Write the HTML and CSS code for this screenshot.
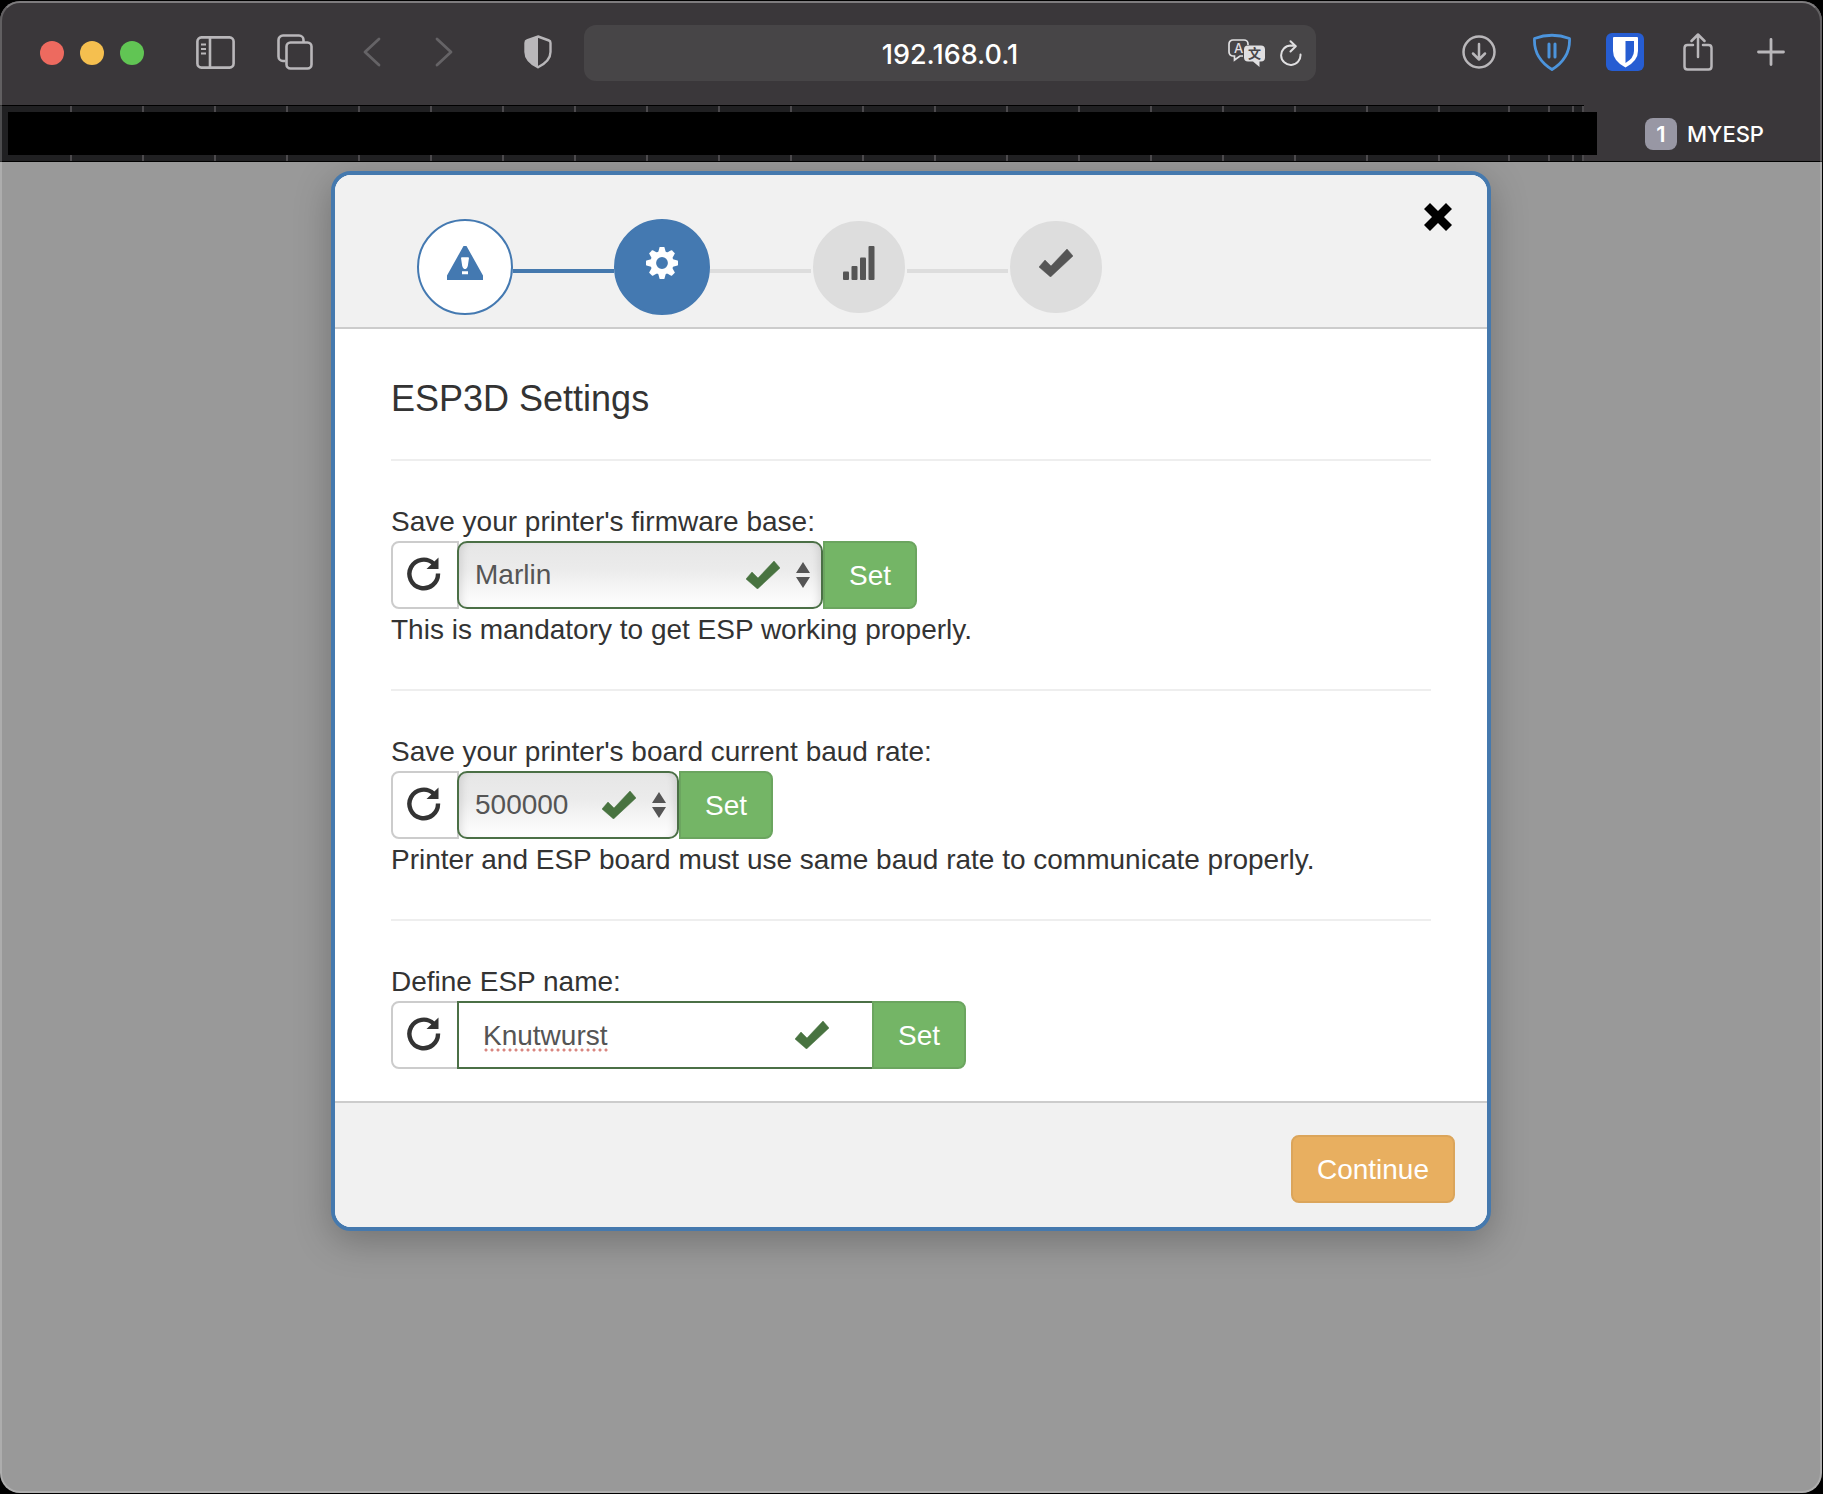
FILE: index.html
```html
<!DOCTYPE html>
<html lang="en">
<head>
<meta charset="utf-8">
<title>MYESP</title>
<link rel="stylesheet" href="styles.css">
</head>
<body>
<svg class="sprite" aria-hidden="true">
  <symbol id="check" viewBox="0 0 34 28"><path d="M0 18 6 11 12 17 28 0 34 7 11.500 28Z" stroke="currentColor" stroke-width=".5"/></symbol>
  <symbol id="repeat" viewBox="0 0 34 34"><path d="M31 16.500A14.300 14.300 0 1 1 26.500 6.500" fill="none" stroke="currentColor" stroke-width="4.400"/><path d="M19.500 12H31.500V0.500Z"/></symbol>
  <symbol id="sort" viewBox="0 0 14 26"><path d="M7 0 14 11H0ZM7 26 14 15H0Z"/></symbol>
</svg>
<div class="window">
  <header class="toolbar">
    <div class="lights"><span class="light red"></span><span class="light yellow"></span><span class="light green"></span></div>
    <div class="tools tools-wide">
      <button class="tool" aria-label="Sidebar"><svg width="39" height="34" viewBox="0 0 39 34" fill="none" stroke="currentColor" stroke-width="2.600"><rect x="1.400" y="2.400" width="36.200" height="30.200" rx="4"/><path d="M14 2V32"/><path d="M5 9.500H10M5 14H10M5 18.500H10" stroke-width="1.800"/></svg></button>
      <button class="tool" aria-label="Tab overview"><svg width="36" height="36" viewBox="0 0 36 36" fill="none" stroke="currentColor" stroke-width="2.600"><path d="M8.500 27H6A4.500 4.500 0 0 1 1.500 22.500V6A4.500 4.500 0 0 1 6 1.500H22A4.500 4.500 0 0 1 26.500 6V8"/><rect x="9.500" y="8.500" width="25" height="26" rx="4"/></svg></button>
    </div>
    <div class="tools tools-nav">
      <button class="tool dim" aria-label="Back"><svg width="18" height="30" viewBox="0 0 18 30" fill="none" stroke="currentColor" stroke-width="2.800" stroke-linecap="round" stroke-linejoin="round"><path d="M16 2 2 15 16 28"/></svg></button>
      <button class="tool dim" aria-label="Forward"><svg width="18" height="30" viewBox="0 0 18 30" fill="none" stroke="currentColor" stroke-width="2.800" stroke-linecap="round" stroke-linejoin="round"><path d="M2 2 16 15 2 28"/></svg></button>
    </div>
    <button class="tool privacy" aria-label="Privacy report"><svg width="28" height="34" viewBox="0 0 28 34"><path d="M14 1.500 25 5.500Q26.500 6 26.500 8V17Q26.500 26 14 32.300Q1.500 26 1.500 17V8Q1.500 6 3 5.500Z" fill="none" stroke="currentColor" stroke-width="2.400"/><path d="M14 1V33Q1 26 1 17V6Z"/></svg></button>
    <div class="address">
      <input class="url" aria-label="Address" value="192.168.0.1">
      <div class="address-tools">
        <button class="mini" aria-label="Translate"><svg width="37" height="28" viewBox="0 0 37 28"><path d="M15 17H12L6.500 21V17H5A4 4 0 0 1 1 13V5A4 4 0 0 1 5 1H16A4 4 0 0 1 20 5V6" fill="none" stroke="currentColor" stroke-width="1.700"/><text class="glyph" x="6" y="14" font-size="13">A</text><path d="M20 6.500H33A4 4 0 0 1 37 10.500V18.500A4 4 0 0 1 33 22.500H31.500V28L25 22.500H20A4 4 0 0 1 16 18.500V10.500A4 4 0 0 1 20 6.500Z"/><text class="glyph glyph-dark" x="20" y="19" font-size="13">文</text></svg></button>
        <button class="mini" aria-label="Reload"><svg width="22" height="26" viewBox="0 0 22 26" fill="none" stroke="currentColor" stroke-width="2" stroke-linecap="round" stroke-linejoin="round"><path d="M20.500 14.500A9.700 9.700 0 1 1 10.800 5.500L15.500 6M10.500 1.200 15.800 6.200 10.500 11.500"/></svg></button>
      </div>
    </div>
    <div class="tools tools-right">
      <button class="tool" aria-label="Downloads"><svg width="34" height="34" viewBox="0 0 34 34" fill="none" stroke="currentColor" stroke-width="2.500" stroke-linecap="round" stroke-linejoin="round"><circle cx="17" cy="17" r="15.500"/><path d="M17 9V24M11 18.500 17 24.500 23 18.500"/></svg></button>
      <button class="tool blocker" aria-label="Content blocker"><svg width="38" height="38" viewBox="0 0 38 38" fill="none" stroke="currentColor" stroke-linejoin="round"><path d="M1.500 5.500Q19-1 36.500 5.500Q37.500 25 19 36.500Q0.500 25 1.500 5.500Z" stroke-width="2.800"/><path d="M16 11V24M22 11V24" stroke-width="3" stroke-linecap="round"/></svg></button>
      <button class="tool" aria-label="Password manager"><svg width="38" height="38" viewBox="0 0 38 38"><rect width="38" height="38" rx="6" fill="#265dd2"/><path d="M8 4H31Q32 4 32 5V18Q32 28 19.500 34.500Q7 28 7 18V5Q7 4 8 4Z" fill="#fff"/><path d="M19.500 8H28V18Q28 25 19.500 30Z" fill="#265dd2"/></svg></button>
      <button class="tool" aria-label="Share"><svg width="30" height="38" viewBox="0 0 30 38" fill="none" stroke="currentColor" stroke-width="2.500" stroke-linecap="round" stroke-linejoin="round"><path d="M10 12H4.500Q1.500 12 1.500 15V33.500Q1.500 36.500 4.500 36.500H25.500Q28.500 36.500 28.500 33.500V15Q28.500 12 25.500 12H20M15 24V2M8.500 8 15 1.500 21.500 8"/></svg></button>
      <button class="tool" aria-label="New tab"><svg width="28" height="28" viewBox="0 0 28 28" fill="none" stroke="currentColor" stroke-width="2.800" stroke-linecap="round"><path d="M14 1.500V26.500M1.500 14H26.500"/></svg></button>
    </div>
  </header>

  <nav class="tabbar" aria-label="Tabs">
    <div class="tabs">
      <span class="tab"></span><span class="tab"></span><span class="tab"></span><span class="tab"></span><span class="tab"></span>
      <span class="tab"></span><span class="tab"></span><span class="tab"></span><span class="tab"></span><span class="tab"></span>
      <span class="tab"></span><span class="tab"></span><span class="tab"></span><span class="tab"></span><span class="tab"></span>
      <span class="tab"></span><span class="tab"></span><span class="tab"></span><span class="tab"></span><span class="tab"></span>
      <span class="tab large"></span><span class="tab medium"></span><span class="tab small"></span><span class="tab tiny"></span>
      <div class="cover"></div>
    </div>
    <a class="tab-active" href="#"><span class="badge">1</span>MYESP</a>
  </nav>

  <main class="page">
    <section class="modal" role="dialog" aria-labelledby="title">
      <div class="modal-header">
        <ol class="steps">
          <li class="step done"><svg width="36" height="34" viewBox="0 0 36 34"><path fill-rule="evenodd" d="M16.500 0H19.500L36 29.500V34H0V29.500ZM14 12Q14 11.200 15 11.200H21Q22 11.200 22 12L20.800 20Q20 23 18.700 23H17.300Q16 23 15.200 20ZM15 25.300V28.300H21V25.300Z"/></svg></li>
          <li class="bar bar-done"></li>
          <li class="step current"><svg width="32" height="32" viewBox="-16 -16 32 32"><circle r="8.800" fill="none" stroke="currentColor" stroke-width="5.800"/><g id="teeth"><path id="tooth" d="M-4-10-2.500-15.500Q-2.300-16-1.800-16H1.800Q2.300-16 2.500-15.500L4-10Z"/><use href="#tooth" transform="rotate(45)"/><use href="#tooth" transform="rotate(90)"/><use href="#tooth" transform="rotate(135)"/></g><use href="#teeth" transform="rotate(180)"/></svg></li>
          <li class="bar"></li>
          <li class="step"><svg width="32" height="34" viewBox="0 0 32 34"><rect y="25.500" width="6" height="8.500" rx="1"/><rect x="8.500" y="20" width="6" height="14" rx="1"/><rect x="17" y="11.500" width="6" height="22.500" rx="1"/><rect x="25.500" width="6" height="34" rx="1"/></svg></li>
          <li class="bar"></li>
          <li class="step"><svg width="34" height="28"><use href="#check"/></svg></li>
        </ol>
        <button class="close" aria-label="Close"><svg width="28" height="28" viewBox="0 0 28 28"><path d="M6 0 14 8 22 0 28 6 20 14 28 22 22 28 14 20 6 28 0 22 8 14 0 6Z"/></svg></button>
      </div>

      <div class="modal-body">
        <h4 class="title" id="title">ESP3D Settings</h4>
        <hr class="rule">
        <label class="line" for="firmware">Save your printer's firmware base:</label>
        <div class="group">
          <button class="btn refresh" aria-label="Refresh firmware"><svg width="34" height="34"><use href="#repeat"/></svg></button>
          <div class="field field-firmware">
            <select class="control select" id="firmware"><option>Marlin</option></select>
            <svg class="field-check" width="34" height="28"><use href="#check"/></svg>
            <svg class="field-sort" width="14" height="26"><use href="#sort"/></svg>
          </div>
          <button class="btn set">Set</button>
        </div>
        <p class="line">This is mandatory to get ESP working properly.</p>
        <hr class="rule">
        <label class="line" for="baud">Save your printer's board current baud rate:</label>
        <div class="group">
          <button class="btn refresh" aria-label="Refresh baud rate"><svg width="34" height="34"><use href="#repeat"/></svg></button>
          <div class="field field-baud">
            <select class="control select" id="baud"><option>500000</option></select>
            <svg class="field-check" width="34" height="28"><use href="#check"/></svg>
            <svg class="field-sort" width="14" height="26"><use href="#sort"/></svg>
          </div>
          <button class="btn set">Set</button>
        </div>
        <p class="line">Printer and ESP board must use same baud rate to communicate properly.</p>
        <hr class="rule">
        <label class="line" for="name">Define ESP name:</label>
        <div class="group">
          <button class="btn refresh" aria-label="Refresh name"><svg width="34" height="34"><use href="#repeat"/></svg></button>
          <div class="field field-name">
            <input class="control text" id="name" value="Knutwurst" spellcheck="false">
            <span class="misspelt"></span>
            <svg class="field-check" width="34" height="28"><use href="#check"/></svg>
          </div>
          <button class="btn set">Set</button>
        </div>
      </div>

      <div class="modal-footer"><button class="btn continue">Continue</button></div>
    </section>
  </main>
</div>
</body>
</html>
```
FILE: styles.css
```css
* { box-sizing: border-box; }
body {
  margin: 0;
  padding: 1px 1px 1px 0;
  background: #000;
  color: #333;
  font: 28px/40px "Liberation Sans", Arial, sans-serif;
}
button, input, select { font: inherit; color: inherit; margin: 0; }
button { cursor: pointer; }
svg { display: block; flex: none; }
svg:not([fill]) { fill: currentColor; }
.sprite { position: absolute; width: 0; height: 0; }

/* Browser window */
.window {
  position: relative;
  display: flex;
  flex-direction: column;
  min-height: calc(100vh - 2px);
  border-radius: 20px;
  overflow: hidden;
  background: #999;
}
.window::after {
  content: "";
  position: absolute;
  inset: 0;
  border: 2px solid rgba(255, 255, 255, 0.2);
  border-top-color: rgba(255, 255, 255, 0.35);
  border-radius: 20px;
  pointer-events: none;
}
.toolbar {
  display: flex;
  align-items: center;
  height: 104px;
  padding: 0 15px 0 40px;
  background: #3a373a;
  color: #b9b7ba;
}
.lights { display: flex; gap: 16px; margin-right: 31px; }
.light { width: 24px; height: 24px; border-radius: 50%; }
.red { background: #ed6a5f; }
.yellow { background: #f5bf4f; }
.green { background: #61c554; }
.tools { display: flex; }
.tool {
  display: flex;
  align-items: center;
  justify-content: center;
  width: 72px;
  height: 56px;
  padding: 0 0 2px;
  border: 0;
  background: none;
}
.tools-wide .tool { width: 80px; }
.tools-nav { margin-left: 1px; }
.tools-right { margin-left: 126px; }
.tools-right .tool { width: 73px; }
.privacy { margin: 0 10px 0 22px; }
.dim { color: #656366; }
.blocker { color: #4c94dc; }
.address {
  position: relative;
  flex: 1;
  min-width: 0;
}
.url {
  display: block;
  width: 100%;
  height: 56px;
  padding: 2px 0 0;
  border: 0;
  border-radius: 12px;
  background: #474547;
  color: #fff;
  text-align: center;
  font: 500 27px/54px Inter, sans-serif;
}
.address-tools {
  position: absolute;
  top: 0;
  right: 14px;
  display: flex;
  align-items: center;
  gap: 15px;
  height: 56px;
  color: #e0dfe1;
}
.mini { padding: 0; border: 0; background: none; }
.glyph { font-family: Inter, "Noto Sans CJK SC", sans-serif; font-weight: 500; }
.glyph-dark { fill: #474547; font-weight: 700; }

/* Tab strip */
.tabbar {
  display: flex;
  height: 57px;
  border-bottom: 1px solid #000;
  background: #3a373a;
}
.tabs {
  position: relative;
  display: flex;
  flex: 1;
  border-top: 1px solid #000;
  background: #202022;
}
.tab { flex: 72 1 0; box-shadow: inset -2px 0 #4c4a4d; }
.large { flex-grow: 70; }
.medium { flex-grow: 40; }
.small { flex-grow: 24; }
.tiny { flex-grow: 10; }
.cover {
  position: absolute;
  inset: 6px -13px 6px 8px;
  background: #000;
}
.tab-active {
  display: flex;
  align-items: center;
  gap: 10px;
  width: 238px;
  padding: 2px 0 0 61px;
  color: #fff;
  text-decoration: none;
  font: 500 22px/32px Inter, sans-serif;
}
.badge {
  width: 32px;
  height: 32px;
  border-radius: 8px;
  background: #9897a4;
  text-align: center;
  font-weight: 600;
}

/* Dialog */
.page { flex: 1; padding: 9px 16px 32px; }
.modal {
  max-width: 1160px;
  margin: 0 auto;
  border: 4px solid #4579ae;
  border-radius: 20px;
  overflow: hidden;
  background: #fff;
  box-shadow: 0 10px 36px rgba(0, 0, 0, 0.25);
}
.modal-header {
  display: flex;
  align-items: flex-start;
  justify-content: space-between;
  padding: 28px 35px 12px 82px;
  border-bottom: 2px solid #ccc;
  background: #f1f1f1;
}
.steps {
  display: flex;
  align-items: flex-start;
  margin: 16px 0 0;
  padding: 0;
  list-style: none;
}
.step {
  display: flex;
  align-items: center;
  justify-content: center;
  width: 96px;
  height: 96px;
  padding: 0 0 8px;
  border: 2px solid #f1f1f1;
  border-radius: 50%;
  background: #ddd;
  color: #555;
}
.done { border-color: #4479b1; background: #fff; color: #4479b1; }
.current { border-color: #4479b1; background: #4479b1; color: #fff; }
.bar { width: 101px; height: 4px; margin-top: 50px; background: #ddd; }
.bar-done { background: #4579ae; }
.close { padding: 0; border: 0; background: none; color: #000; }
.modal-body { padding: 50px 56px 32px; }
.title { margin: 0; font-size: 36px; line-height: 40px; font-weight: 400; }
.rule { margin: 40px 0; border: 0; border-top: 2px solid #eee; }
.line { display: block; margin: 0; padding-top: 2px; line-height: 38px; }
.group { display: flex; height: 68px; }
.btn { border: 2px solid; border-radius: 8px; padding: 2px 24px 0; color: #fff; }
.refresh {
  width: 68px;
  margin-right: -2px;
  padding: 0 0 2px 14px;
  border-color: #ccc;
  border-radius: 8px 0 0 8px;
  background: #fff;
  color: #333;
}
.set {
  width: 94px;
  border-color: #6ba55f;
  border-radius: 0 8px 8px 0;
  background: #74b566;
}
.field { position: relative; min-width: 0; }
.field-firmware { width: 366px; }
.field-baud { width: 222px; }
.field-name { width: 415px; }
.control {
  display: block;
  width: 100%;
  height: 68px;
  border: 2px solid #4b7046;
  color: #555;
}
.select {
  appearance: none;
  padding: 0 64px 0 16px;
  border-radius: 10px;
  background: linear-gradient(#e6e6e6, #ebebeb 40%, #fff);
  box-shadow: inset 8px 0 8px -6px rgba(0, 0, 0, 0.12), inset -8px 0 8px -6px rgba(0, 0, 0, 0.12);
}
.text {
  padding: 2px 88px 0 24px;
  border-right: 0;
  border-radius: 0;
  background: #fff;
}
.field-check, .field-sort, .misspelt { position: absolute; pointer-events: none; }
.field-check { top: 20px; right: 43px; color: #487340; }
.field-sort { top: 21px; right: 13px; color: #555; }
.misspelt {
  top: 47px;
  left: 26px;
  width: 126px;
  height: 4px;
  background: radial-gradient(circle, #d98680 0 1px, transparent 2px) 0 0 / 6px 4px;
}
.modal-footer {
  display: flex;
  justify-content: flex-end;
  padding: 32px 32px 24px;
  border-top: 2px solid #ccc;
  background: #f1f1f1;
}
.continue { height: 68px; border-color: #dba55b; background: #e8af60; }
```
